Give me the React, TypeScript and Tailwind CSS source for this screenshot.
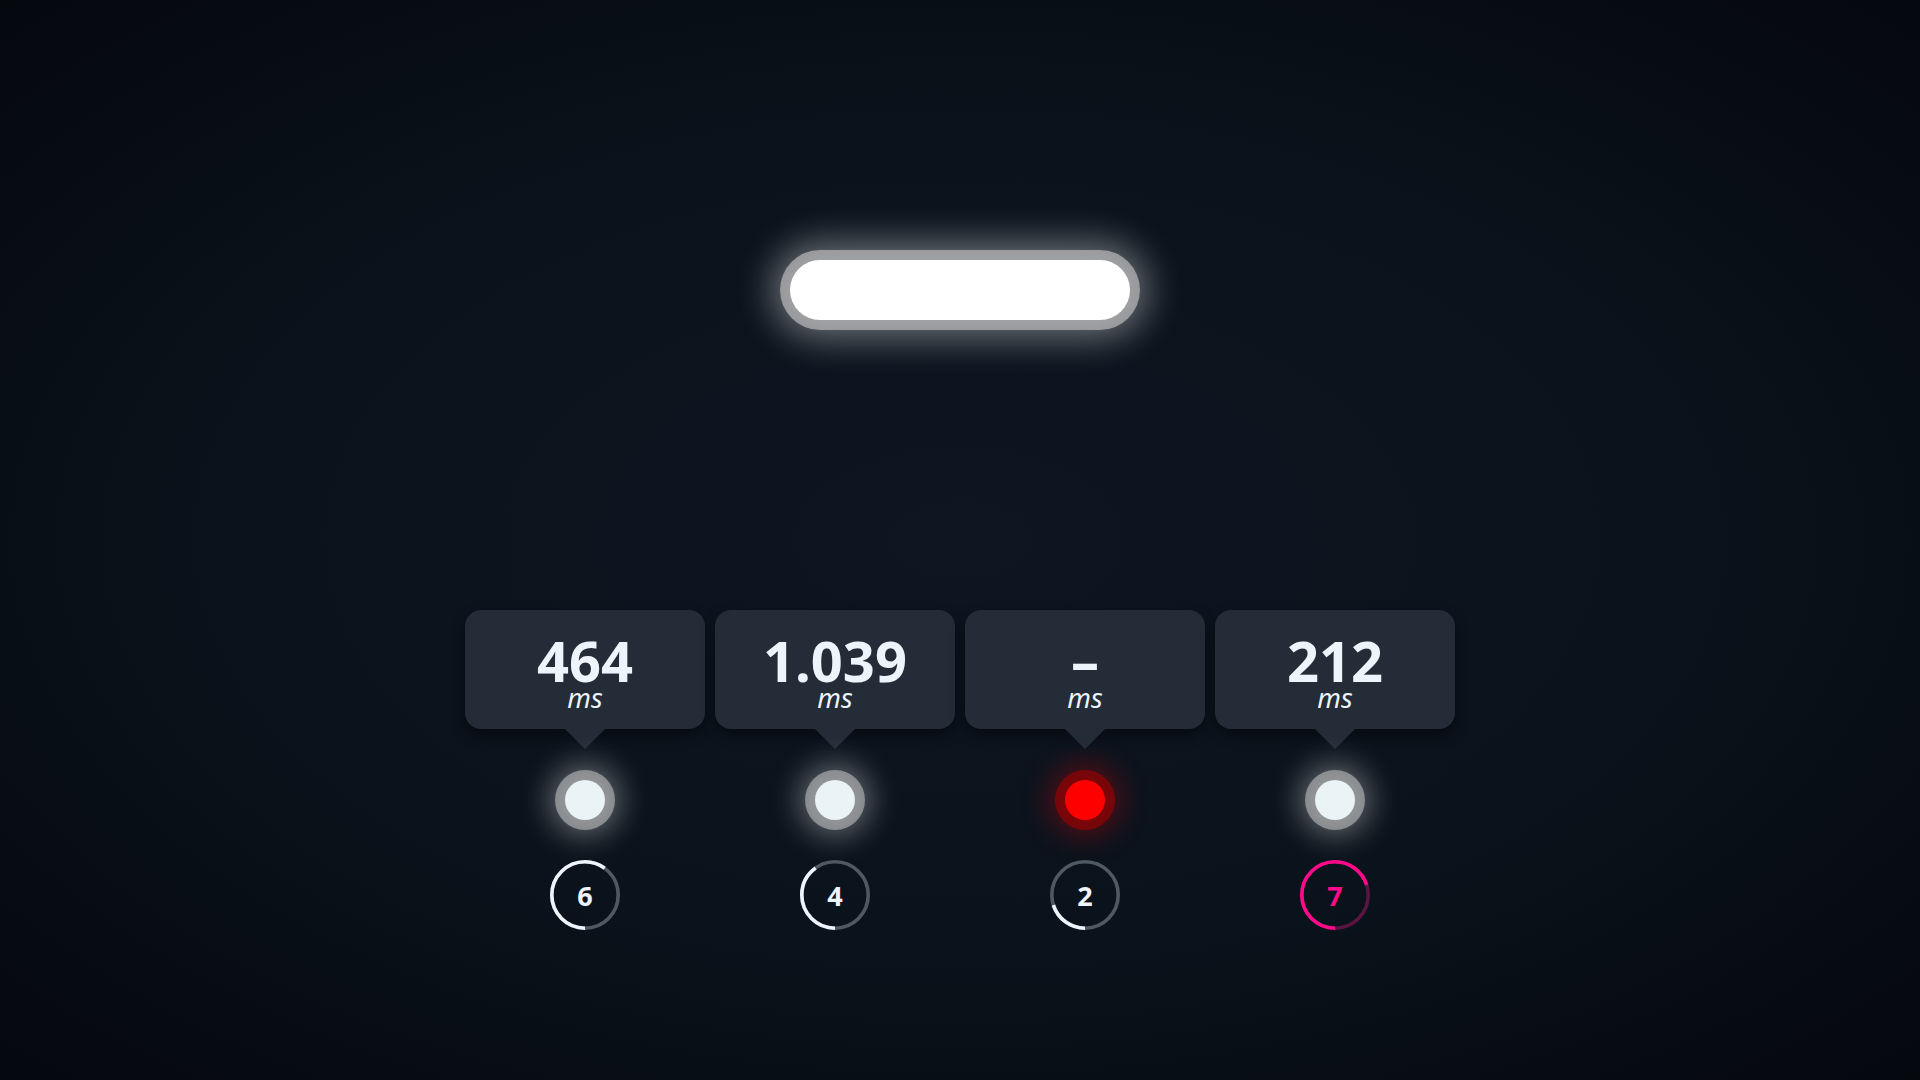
import React from "react";

type Lane = {
    value: string;
    dot: "white" | "red";
    count: number;
    tone: "light" | "pink";
};

const lanes: Lane[] = [
    { value: "464", dot: "white", count: 6, tone: "light" },
    { value: "1.039", dot: "white", count: 4, tone: "light" },
    { value: "–", dot: "red", count: 2, tone: "light" },
    { value: "212", dot: "white", count: 7, tone: "pink" },
];

function CountRing({ count, tone }: { count: number; tone: "light" | "pink" }) {
    const r = 33.2;
    const len = 2 * Math.PI * r;
    const done = (count / 10) * len;
    const main = tone === "pink" ? "#ff0a8a" : "#eef4fb";
    const track = tone === "pink" ? "#5a1442" : "#4f5863";
    return (
        <div className="relative w-[70px] h-[70px] mt-[40px]">
            <svg width="70" height="70" viewBox="0 0 70 70" className="absolute inset-0">
                <circle cx="35" cy="35" r={r} fill="none" stroke={track} strokeWidth="3.6" />
                <circle
                    cx="35"
                    cy="35"
                    r={r}
                    fill="none"
                    stroke={main}
                    strokeWidth="3.6"
                    strokeDasharray={`${done} ${len}`}
                    transform="rotate(90 35 35)"
                />
            </svg>
            <div
                className={`absolute inset-0 flex items-center justify-center text-[27px] font-bold leading-none ${
                    tone === "pink" ? "text-[#ff0a8a]" : "text-[#eef4fb]"
                }`}
            >
                {count}
            </div>
        </div>
    );
}

function LaneColumn({ lane }: { lane: Lane }) {
    return (
        <div className="flex flex-col items-center w-[240px]">
            <div className="w-[240px] h-[119px] rounded-2xl bg-[#232c37] shadow-[0_6px_14px_rgba(0,0,0,0.45)] flex flex-col items-center pt-[26px] text-[#eef4fb]">
                <div className="text-[56px] leading-[48px] font-bold">{lane.value}</div>
                <div className="text-[27px] leading-[28px] italic">ms</div>
            </div>
            <div className="w-0 h-0 border-x-[20px] border-x-transparent border-t-[20px] border-t-[#232c37]" />
            {lane.dot === "red" ? (
                <div className="mt-[31px] w-10 h-10 rounded-full bg-[#ff0000] shadow-[0_0_0_10px_rgba(160,0,0,0.6),0_0_30px_16px_rgba(255,0,0,0.3)]" />
            ) : (
                <div className="mt-[31px] w-10 h-10 rounded-full bg-[#eaf3f5] shadow-[0_0_0_10px_rgba(185,185,185,0.62),0_0_30px_16px_rgba(255,255,255,0.36)]" />
            )}
            <CountRing count={lane.count} tone={lane.tone} />
        </div>
    );
}

export default function App() {
    return (
        <div
            className="w-full h-screen overflow-hidden flex flex-col items-center bg-[radial-gradient(ellipse_at_center,#0d1621_0%,#0a121b_55%,#05080d_100%)]"
            style={{ fontFamily: '"Noto Sans", "Open Sans", sans-serif' }}
        >
            <div className="mt-[260px] w-[340px] h-[60px] rounded-full bg-white shadow-[0_0_0_10px_rgba(195,195,195,0.65),0_0_36px_18px_rgba(255,255,255,0.4)]" />
            <div className="mt-[290px] flex gap-[10px]">
                {lanes.map((lane, i) => (
                    <LaneColumn key={i} lane={lane} />
                ))}
            </div>
        </div>
    );
}
